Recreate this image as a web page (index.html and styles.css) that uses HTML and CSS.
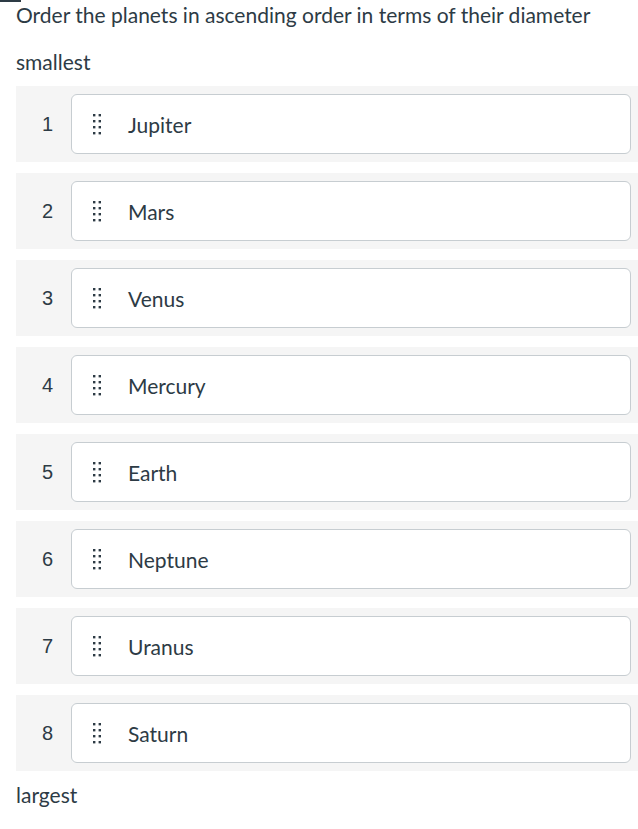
FILE: index.html
```
<!DOCTYPE html>
<html>
<head>
<meta charset="utf-8">
<link rel="stylesheet" href="styles.css">
</head>
<body>
<div class="topbar"></div>
<div class="page">
  <p class="question">Order the planets in ascending order in terms of their diameter</p>
  <p class="label label-top">smallest</p>
  <ol class="list">
    <li class="row"><span class="num">1</span><div class="card"><svg class="grip" width="9" height="21" viewBox="0 0 9 21"><g fill="#2d3b45"><rect x="0" y="0" width="2.4" height="2.4"/><rect x="5.6" y="0" width="2.4" height="2.4"/><rect x="0" y="6" width="2.4" height="2.4"/><rect x="5.6" y="6" width="2.4" height="2.4"/><rect x="0" y="12" width="2.4" height="2.4"/><rect x="5.6" y="12" width="2.4" height="2.4"/><rect x="0" y="18" width="2.4" height="2.4"/><rect x="5.6" y="18" width="2.4" height="2.4"/></g></svg><span class="name">Jupiter</span></div></li>
    <li class="row"><span class="num">2</span><div class="card"><svg class="grip" width="9" height="21" viewBox="0 0 9 21"><g fill="#2d3b45"><rect x="0" y="0" width="2.4" height="2.4"/><rect x="5.6" y="0" width="2.4" height="2.4"/><rect x="0" y="6" width="2.4" height="2.4"/><rect x="5.6" y="6" width="2.4" height="2.4"/><rect x="0" y="12" width="2.4" height="2.4"/><rect x="5.6" y="12" width="2.4" height="2.4"/><rect x="0" y="18" width="2.4" height="2.4"/><rect x="5.6" y="18" width="2.4" height="2.4"/></g></svg><span class="name">Mars</span></div></li>
    <li class="row"><span class="num">3</span><div class="card"><svg class="grip" width="9" height="21" viewBox="0 0 9 21"><g fill="#2d3b45"><rect x="0" y="0" width="2.4" height="2.4"/><rect x="5.6" y="0" width="2.4" height="2.4"/><rect x="0" y="6" width="2.4" height="2.4"/><rect x="5.6" y="6" width="2.4" height="2.4"/><rect x="0" y="12" width="2.4" height="2.4"/><rect x="5.6" y="12" width="2.4" height="2.4"/><rect x="0" y="18" width="2.4" height="2.4"/><rect x="5.6" y="18" width="2.4" height="2.4"/></g></svg><span class="name">Venus</span></div></li>
    <li class="row"><span class="num">4</span><div class="card"><svg class="grip" width="9" height="21" viewBox="0 0 9 21"><g fill="#2d3b45"><rect x="0" y="0" width="2.4" height="2.4"/><rect x="5.6" y="0" width="2.4" height="2.4"/><rect x="0" y="6" width="2.4" height="2.4"/><rect x="5.6" y="6" width="2.4" height="2.4"/><rect x="0" y="12" width="2.4" height="2.4"/><rect x="5.6" y="12" width="2.4" height="2.4"/><rect x="0" y="18" width="2.4" height="2.4"/><rect x="5.6" y="18" width="2.4" height="2.4"/></g></svg><span class="name">Mercury</span></div></li>
    <li class="row"><span class="num">5</span><div class="card"><svg class="grip" width="9" height="21" viewBox="0 0 9 21"><g fill="#2d3b45"><rect x="0" y="0" width="2.4" height="2.4"/><rect x="5.6" y="0" width="2.4" height="2.4"/><rect x="0" y="6" width="2.4" height="2.4"/><rect x="5.6" y="6" width="2.4" height="2.4"/><rect x="0" y="12" width="2.4" height="2.4"/><rect x="5.6" y="12" width="2.4" height="2.4"/><rect x="0" y="18" width="2.4" height="2.4"/><rect x="5.6" y="18" width="2.4" height="2.4"/></g></svg><span class="name">Earth</span></div></li>
    <li class="row"><span class="num">6</span><div class="card"><svg class="grip" width="9" height="21" viewBox="0 0 9 21"><g fill="#2d3b45"><rect x="0" y="0" width="2.4" height="2.4"/><rect x="5.6" y="0" width="2.4" height="2.4"/><rect x="0" y="6" width="2.4" height="2.4"/><rect x="5.6" y="6" width="2.4" height="2.4"/><rect x="0" y="12" width="2.4" height="2.4"/><rect x="5.6" y="12" width="2.4" height="2.4"/><rect x="0" y="18" width="2.4" height="2.4"/><rect x="5.6" y="18" width="2.4" height="2.4"/></g></svg><span class="name">Neptune</span></div></li>
    <li class="row"><span class="num">7</span><div class="card"><svg class="grip" width="9" height="21" viewBox="0 0 9 21"><g fill="#2d3b45"><rect x="0" y="0" width="2.4" height="2.4"/><rect x="5.6" y="0" width="2.4" height="2.4"/><rect x="0" y="6" width="2.4" height="2.4"/><rect x="5.6" y="6" width="2.4" height="2.4"/><rect x="0" y="12" width="2.4" height="2.4"/><rect x="5.6" y="12" width="2.4" height="2.4"/><rect x="0" y="18" width="2.4" height="2.4"/><rect x="5.6" y="18" width="2.4" height="2.4"/></g></svg><span class="name">Uranus</span></div></li>
    <li class="row"><span class="num">8</span><div class="card"><svg class="grip" width="9" height="21" viewBox="0 0 9 21"><g fill="#2d3b45"><rect x="0" y="0" width="2.4" height="2.4"/><rect x="5.6" y="0" width="2.4" height="2.4"/><rect x="0" y="6" width="2.4" height="2.4"/><rect x="5.6" y="6" width="2.4" height="2.4"/><rect x="0" y="12" width="2.4" height="2.4"/><rect x="5.6" y="12" width="2.4" height="2.4"/><rect x="0" y="18" width="2.4" height="2.4"/><rect x="5.6" y="18" width="2.4" height="2.4"/></g></svg><span class="name">Saturn</span></div></li>
  </ol>
  <p class="label label-bottom">largest</p>
</div>
</body>
</html>
```
FILE: styles.css
```
html, body {
  margin: 0;
  padding: 0;
  background: #ffffff;
}
body {
  font-family: Lato, "Liberation Sans", sans-serif;
  color: #2d3b45;
  font-size: 21px;
  overflow: hidden;
}
.topbar {
  width: 21px;
  height: 2px;
  background: #2d3b45;
}
.page {
  padding-left: 16px;
}
.question {
  margin: 0;
  margin-top: -2px;
  line-height: 30px;
}
.label {
  margin: 0;
  line-height: 30px;
}
.label-top {
  margin-top: 17px;
}
.list {
  list-style: none;
  margin: 9px 0 0 0;
  padding: 0;
  display: flex;
  flex-direction: column;
  gap: 11px;
}
.row {
  display: flex;
  align-items: center;
  background: #f5f5f5;
  height: 76px;
  padding-left: 12px;
  padding-right: 7px;
}
.num {
  width: 39px;
  margin-right: 4px;
  text-align: center;
  font-family: "Liberation Sans", Arial, sans-serif;
  font-size: 20px;
}
.card {
  flex: 1;
  height: 58px;
  box-sizing: content-box;
  border: 1px solid #c7cdd1;
  border-radius: 6px;
  background: #ffffff;
  display: flex;
  align-items: center;
  padding-left: 21px;
}
.grip {
  display: block;
  flex: none;
}
.name {
  margin-left: 26px;
  font-size: 21px;
}
.label-bottom {
  margin-top: 9px;
}
```
